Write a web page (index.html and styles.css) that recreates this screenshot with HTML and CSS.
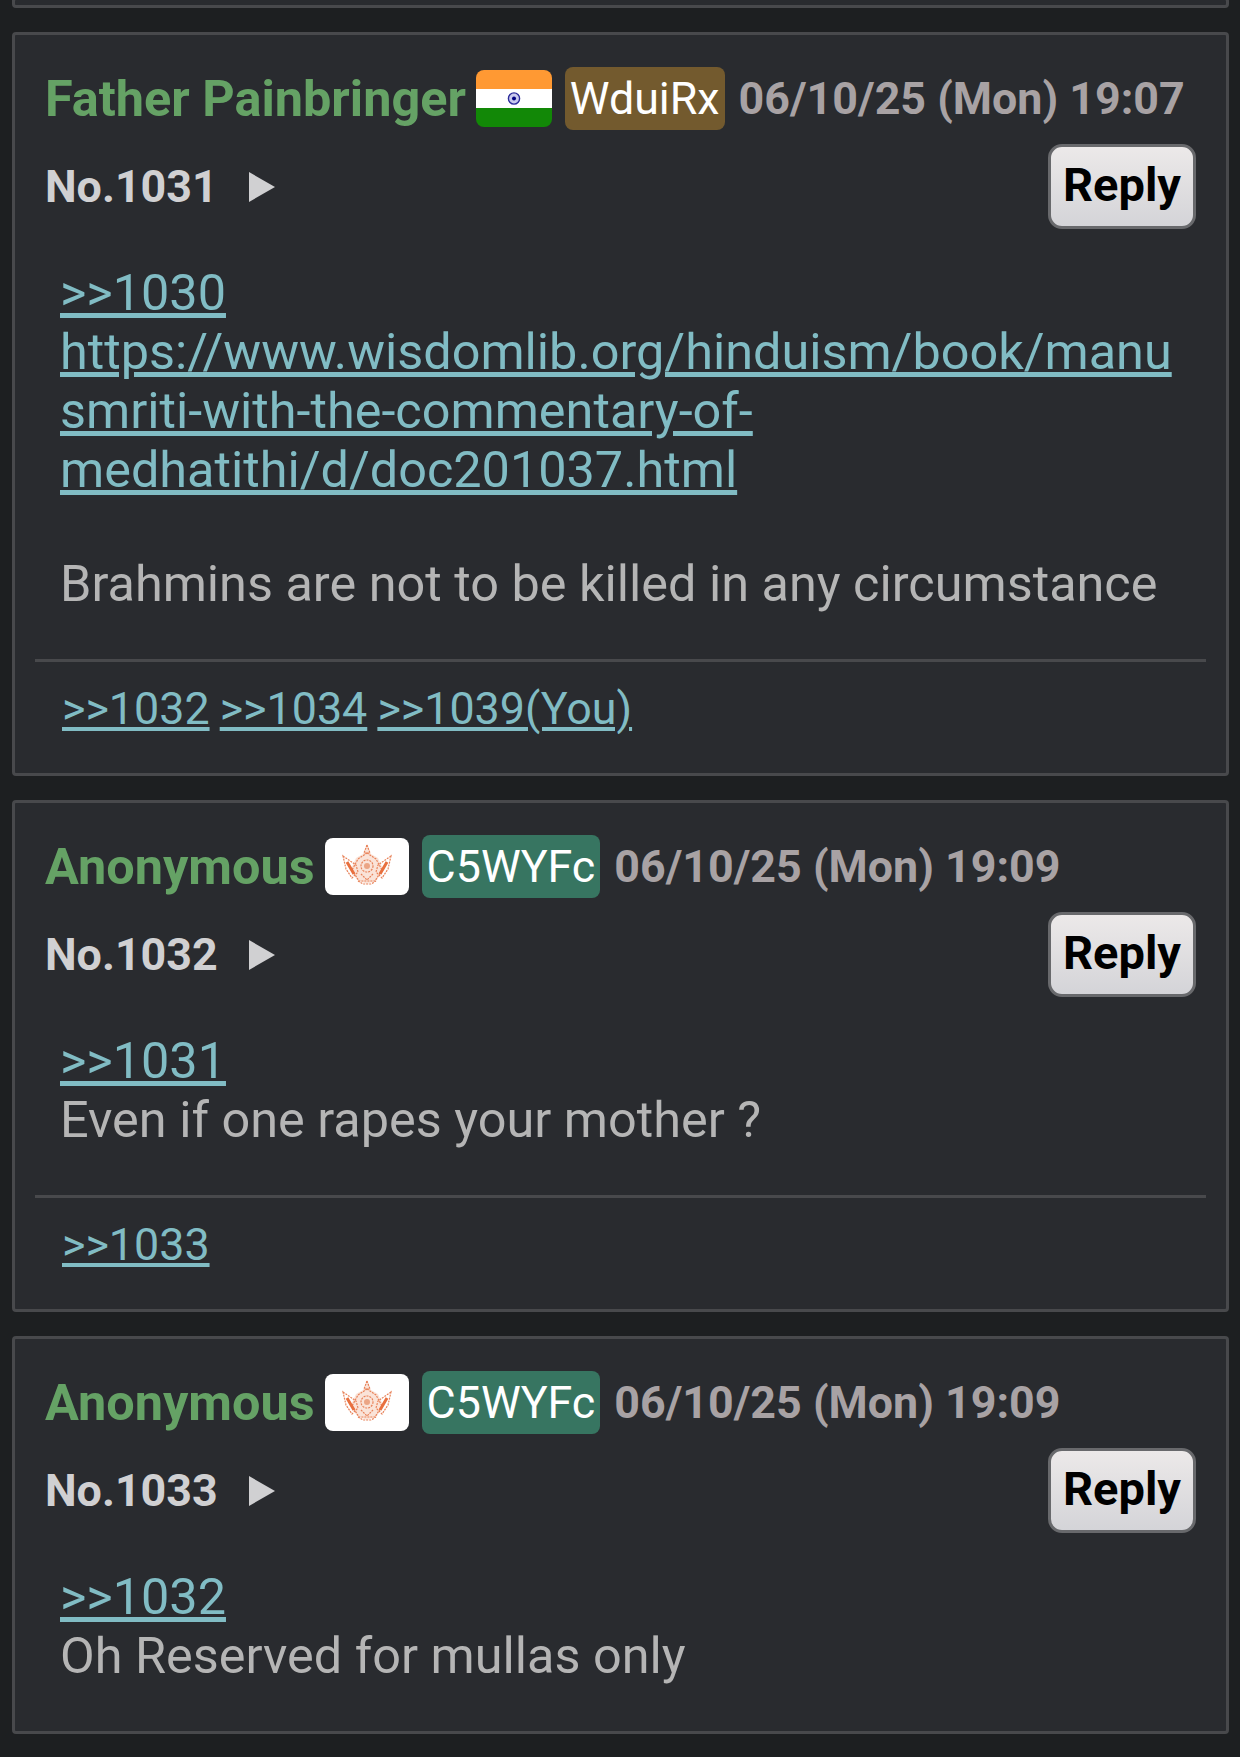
FILE: index.html
```html
<!DOCTYPE html>
<html>
  <head>
    <meta charset="UTF-8">
    <title>Thread</title>
    <link rel="stylesheet" href="styles.css">
  </head>
  <body>
    <div class="post post-prev"></div>

    <div class="post">
      <div class="post-head">
        <span class="name">Father Painbringer</span>
        <svg class="flag" viewBox="0 0 76 57">
          <rect width="76" height="19" fill="#ff9933"/>
          <rect y="19" width="76" height="19" fill="#ffffff"/>
          <rect y="38" width="76" height="19" fill="#128807"/>
          <circle cx="38" cy="28.5" r="5.6" fill="#c9c9ee" stroke="#2b2b9a" stroke-width="1.4"/>
          <circle cx="38" cy="28.5" r="2" fill="#000080"/>
        </svg>
        <span class="poster-id id-brown">WduiRx</span>
        <span class="date">06/10/25 (Mon) 19:07</span>
      </div>
      <div class="post-sub">
        <span class="num">No.1031</span>
        <span class="arrow"></span>
        <button class="reply">Reply</button>
      </div>
      <div class="body">
        <a href="#">&gt;&gt;1030</a><br>
        <a href="#">https://www.wisdomlib.org/hinduism/book/manusmriti-with-the-commentary-of-medhatithi/d/doc201037.html</a>
        <div class="blank"></div>
        Brahmins are not to be killed in any circumstance
      </div>
      <div class="replies">
        <a href="#">&gt;&gt;1032</a> <a href="#">&gt;&gt;1034</a> <a href="#">&gt;&gt;1039(You)</a>
      </div>
    </div>

    <div class="post">
      <div class="post-head">
        <span class="name">Anonymous</span>
        <svg class="flag flag-wide" viewBox="0 0 84 57">
          <rect width="84" height="57" fill="#ffffff"/>
          <path d="M42 7l4 9 7 4 5 11-6 11-10 4-10-4-6-11 5-11 7-4z" fill="#fae3d8"/>
          <g fill="none" stroke="#e8835a" stroke-width="1.2" stroke-dasharray="2 1">
            <path d="M42 7l3 8h-6z"/>
            <path d="M42 15l9 6 6 11-7 11H34l-7-11 6-11z"/>
            <circle cx="42" cy="28" r="6"/>
            <path d="M18 18l13 9 2 7-6 6-6-9zM66 18l-13 9-2 7 6 6 6-9z"/>
            <path d="M33 43l5 3h8l5-3M36 36l6 6 6-6"/>
          </g>
          <circle cx="42" cy="28" r="3" fill="#eba585"/>
          <path d="M22 24l7 12M62 24l-7 12" stroke="#e8703f" stroke-width="3"/>
        </svg>
        <span class="poster-id id-green">C5WYFc</span>
        <span class="date">06/10/25 (Mon) 19:09</span>
      </div>
      <div class="post-sub">
        <span class="num">No.1032</span>
        <span class="arrow"></span>
        <button class="reply">Reply</button>
      </div>
      <div class="body">
        <a href="#">&gt;&gt;1031</a><br>
        Even if one rapes your mother ?
      </div>
      <div class="replies">
        <a href="#">&gt;&gt;1033</a>
      </div>
    </div>

    <div class="post">
      <div class="post-head">
        <span class="name">Anonymous</span>
        <svg class="flag flag-wide" viewBox="0 0 84 57">
          <rect width="84" height="57" fill="#ffffff"/>
          <path d="M42 7l4 9 7 4 5 11-6 11-10 4-10-4-6-11 5-11 7-4z" fill="#fae3d8"/>
          <g fill="none" stroke="#e8835a" stroke-width="1.2" stroke-dasharray="2 1">
            <path d="M42 7l3 8h-6z"/>
            <path d="M42 15l9 6 6 11-7 11H34l-7-11 6-11z"/>
            <circle cx="42" cy="28" r="6"/>
            <path d="M18 18l13 9 2 7-6 6-6-9zM66 18l-13 9-2 7 6 6 6-9z"/>
            <path d="M33 43l5 3h8l5-3M36 36l6 6 6-6"/>
          </g>
          <circle cx="42" cy="28" r="3" fill="#eba585"/>
          <path d="M22 24l7 12M62 24l-7 12" stroke="#e8703f" stroke-width="3"/>
        </svg>
        <span class="poster-id id-green">C5WYFc</span>
        <span class="date">06/10/25 (Mon) 19:09</span>
      </div>
      <div class="post-sub">
        <span class="num">No.1033</span>
        <span class="arrow"></span>
        <button class="reply">Reply</button>
      </div>
      <div class="body">
        <a href="#">&gt;&gt;1032</a><br>
        Oh Reserved for mullas only
      </div>
    </div>
  </body>
</html>
```

FILE: styles.css
```css
html, body {
  height: 100%;
}

body {
  margin: 0;
  padding: 0 11px 0 12px;
  overflow: hidden;
  background-color: #1d1f21;
  font-family: Roboto, sans-serif;
}

a {
  color: #81bcc4;
  text-decoration: underline;
  text-decoration-thickness: 4.5px;
  text-underline-offset: 3px;
}

.post {
  background-color: #292b2f;
  border: 3px solid #48494c;
  border-radius: 4px;
  margin-bottom: 24px;
  padding: 31px 20px 26px 20px;
}

.post-prev {
  height: 5px;
  padding: 0;
  margin-top: -3px;
  margin-bottom: 24px;
}

.post-head {
  display: flex;
  align-items: center;
  gap: 10px;
  padding-left: 10px;
  height: 64px;
}

.name {
  color: #65a265;
  font-size: 50.4px;
  font-weight: 700;
}

.flag {
  width: 76px;
  height: 57px;
  border-radius: 8px;
}

.flag-wide {
  width: 84px;
}

.poster-id {
  color: #ffffff;
  font-size: 44.8px;
  margin-left: 3px;
  padding: 5px 5px;
  border-radius: 8px;
  height: 53px;
  line-height: 53px;
}

.id-brown {
  background-color: #735a2e;
}

.id-green {
  background-color: #377561;
}

.date {
  color: #a8a2a4;
  font-size: 44.8px;
  font-weight: 700;
  margin-left: 4px;
}

.post-sub {
  display: flex;
  align-items: center;
  padding-left: 10px;
  padding-right: 10px;
  margin-top: 14px;
  height: 85px;
}

.num {
  color: #d0d0d2;
  font-size: 44.8px;
  font-weight: 700;
}

.arrow {
  width: 0;
  height: 0;
  margin-left: 31px;
  border-left: 26px solid #d0d0d2;
  border-top: 15px solid transparent;
  border-bottom: 15px solid transparent;
}

.reply {
  margin-left: auto;
  width: 148px;
  height: 85px;
  padding: 0 0 4px 0;
  border: 3px solid #68696c;
  border-radius: 14px;
  background: linear-gradient(#ece9e9, #d4d4d8);
  color: #000000;
  font-family: Roboto, sans-serif;
  font-size: 47px;
  font-weight: 700;
}

.body {
  margin-top: 34px;
  padding-left: 25px;
  padding-right: 10px;
  padding-bottom: 20px;
  color: #b5b5b5;
  font-size: 50.4px;
  line-height: 59px;
  overflow-wrap: break-word;
}

.blank {
  height: 55px;
}

.replies {
  margin-top: 26px;
  padding-top: 18px;
  padding-bottom: 9px;
  padding-left: 27px;
  border-top: 3px solid #48494c;
  font-size: 44.8px;
  line-height: 58px;
  word-spacing: -1px;
}

.replies a {
  text-decoration-thickness: 4px;
}
```
